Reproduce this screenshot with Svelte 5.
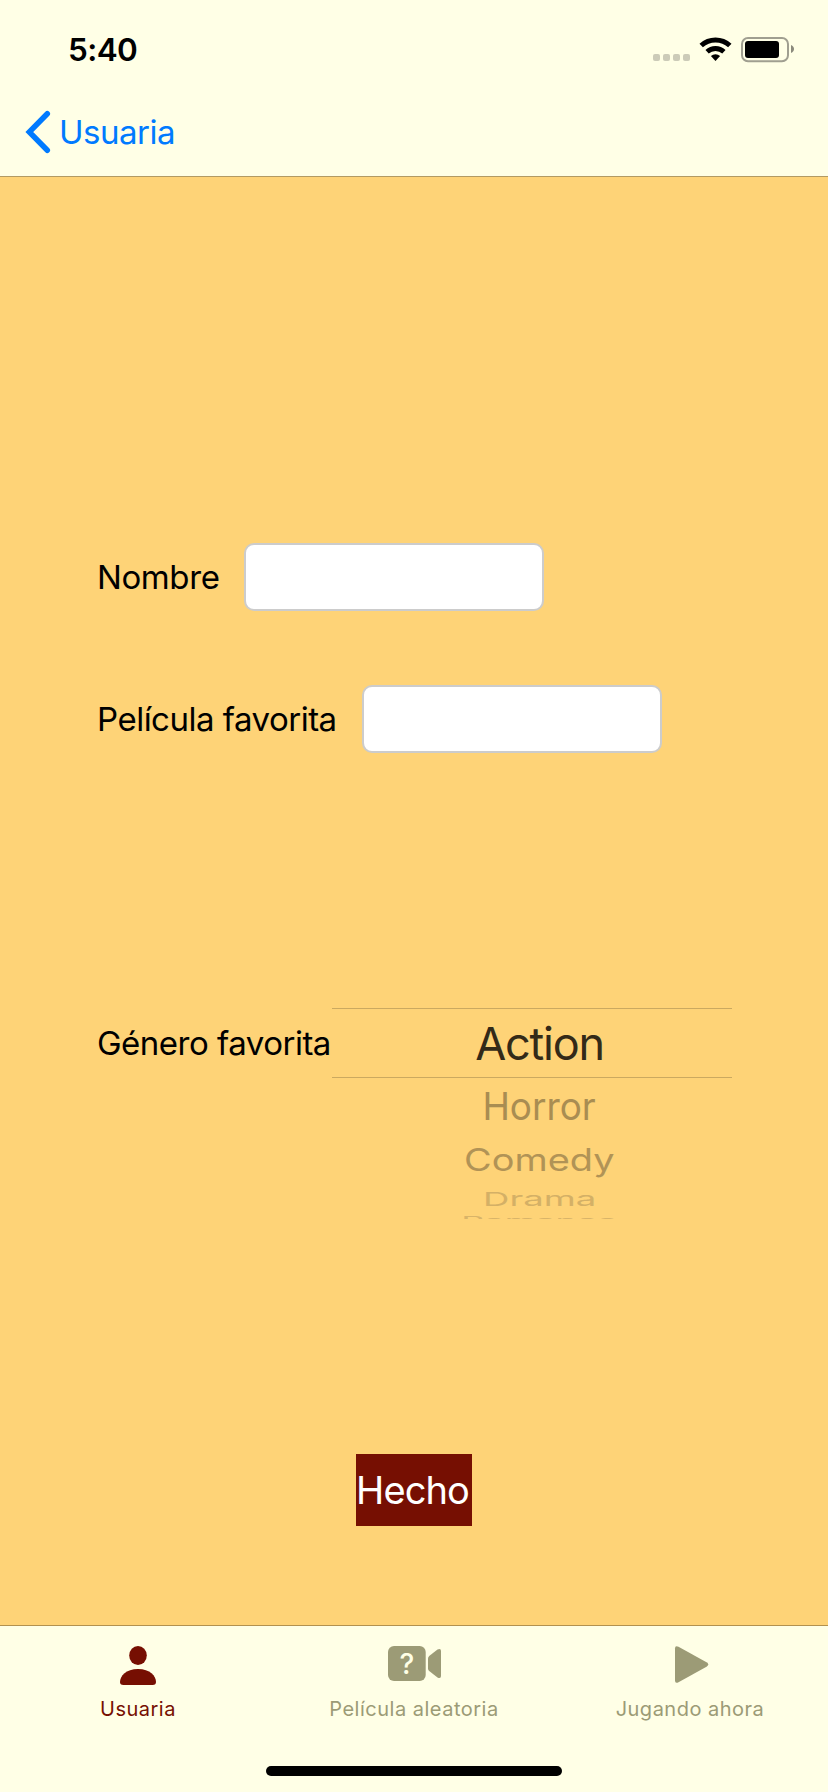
<script>
  let name = $state('');
  let movie = $state('');
  const genres = [
    { label: 'Action', cls: 'g0' },
    { label: 'Horror', cls: 'g1' },
    { label: 'Comedy', cls: 'g2' },
    { label: 'Drama', cls: 'g3' },
    { label: 'Romance', cls: 'g4' }
  ];
</script>

<div class="screen">
  <header>
    <div class="status">
      <span class="time">5:40</span>
      <svg class="indicators" width="152" height="40" viewBox="648 30 152 40">
        <g fill="#cccbb8">
          <rect x="653" y="54" width="7" height="7" rx="2" />
          <rect x="663" y="54" width="7" height="7" rx="2" />
          <rect x="673" y="54" width="7" height="7" rx="2" />
          <rect x="683" y="54" width="7" height="7" rx="2" />
        </g>
        <g fill="none" stroke="#000">
          <path stroke-width="5" d="M701.2 45.5A21 21 0 0 1 729.8 45.5" />
          <path stroke-width="4.8" d="M707.1 51.8A12.3 12.3 0 0 1 723.9 51.8" />
        </g>
        <path d="M715.5 61L710.9 56A6.8 6.8 0 0 1 720.1 56Z" />
        <rect x="742" y="38" width="46" height="23.3" rx="6" fill="none" stroke="#a09f90" stroke-width="2" />
        <rect x="745" y="41" width="34" height="17" rx="3" />
        <path d="M791 45C795 46.500 795 51.500 791 53Z" fill="#8b8a7c" />
      </svg>
    </div>
    <nav>
      <svg width="26" height="44" viewBox="25 110 26 44">
        <path d="M47.3 113.700L29.300 132L47.300 150.300" fill="none" stroke="#007aff" stroke-width="5.500" stroke-linecap="round" />
      </svg>
      <span class="back">Usuaria</span>
    </nav>
  </header>

  <main>
    <label class="row"><span class="l1">Nombre</span><input bind:value={name} /></label>
    <label class="row"><span class="l2">Película favorita</span><input bind:value={movie} /></label>
    <div class="genre">
      <span class="l3">Género favorita</span>
      <div class="picker">
        {#each genres as g}
          <div class={['option', g.cls]}><span>{g.label}</span></div>
        {/each}
      </div>
    </div>
    <button><span>Hecho</span></button>
  </main>

  <footer>
    <div class="tabs">
      <div class="tab active">
        <svg width="60" height="40" viewBox="0 0 60 40" fill="currentColor">
          <ellipse cx="30" cy="9.500" rx="8.800" ry="9.500" />
          <path d="M15.500 39C13 39 12 38 12 36C12 30 18 23 30 23S48 30 48 36C48 38 47 39 44.500 39Z" />
        </svg>
        <span class="t1">Usuaria</span>
      </div>
      <div class="tab">
        <svg width="60" height="40" viewBox="0 0 60 40" fill="currentColor">
          <rect x="4" y="0" width="37.700" height="35" rx="6" />
          <path d="M44 12.500Q44 11 45.200 10L53.500 3.500Q57 2 57 5V30Q57 33 53.500 31.500L45.200 25Q44 24 44 22.500Z" />
          <text x="23" y="27.800" text-anchor="middle" font-size="28" font-weight="500" fill="#ffffe6">?</text>
        </svg>
        <span class="t2">Película aleatoria</span>
      </div>
      <div class="tab">
        <svg width="60" height="40" viewBox="0 0 60 40" fill="currentColor">
          <path d="M15 2.500Q15 -1 18.500 .7L46.500 16.300Q50 18.500 46.500 20.700L18.500 36.300Q15 38 15 34.500Z" />
        </svg>
        <span class="t3">Jugando ahora</span>
      </div>
    </div>
    <div class="home"></div>
  </footer>
</div>

<style>
  :global(body) { margin: 0; }
  .screen {
    width: 828px; height: 1792px; display: flex; flex-direction: column; overflow: hidden;
    background: #fed377; color: #000; font-family: Inter, 'Liberation Sans', sans-serif;
    font-size: 33px; white-space: nowrap;
  }
  .screen * { box-sizing: border-box; }
  svg { display: block; flex: none; }
  header { height: 177px; background: #ffffe6; border-bottom: 1px solid #b29a63; flex: none; }
  .status { height: 88px; padding: 30px 28px 0 68px; display: flex; justify-content: space-between; }
  .time { font-size: 31.5px; font-weight: 600; line-height: 40px; letter-spacing: -0.6px; }
  nav { height: 88px; padding-left: 25px; display: flex; align-items: center; gap: 8px; color: #007aff; }
  .back { letter-spacing: -0.5px; }
  main { flex: 1; padding: 366px 0 0 97px; display: flex; flex-direction: column; align-items: flex-start; }
  .row { height: 68px; margin-bottom: 74px; display: flex; align-items: center; }
  .l1 { width: 147px; letter-spacing: -0.4px; }
  .l2 { width: 265px; letter-spacing: -0.5px; }
  .l3 { width: 235px; line-height: 70px; letter-spacing: -0.5px; }
  input {
    width: 300px; height: 68px; border: 2px solid #ccc; border-radius: 10px; background: #fff;
    padding: 0 14px; font: inherit; outline: none;
  }
  .genre { display: flex; margin-top: 181px; height: 211px; }
  .picker { width: 400px; height: 211px; overflow: hidden; }
  .option { display: flex; align-items: center; justify-content: center; padding-left: 15px; font-size: 45px; color: #a98d52; }
  .option span { display: block; flex: none; line-height: 54px; }
  .g0 { height: 70px; padding-top: 2px; color: #332a18; border: solid #cba960; border-width: 1px 0; }
  .g0 span { letter-spacing: -1.2px; }
  .g1 { height: 56px; }
  .g1 span { transform: scale(0.82, 0.86); }
  .g2 { height: 52px; color: #b19356; }
  .g2 span { transform: scale(0.843, 0.68); }
  .g3 { height: 25px; color: #d4b066; }
  .g3 span { transform: scale(0.812, 0.43); }
  .g4 { height: 19px; color: #d9b468; }
  .g4 span { transform: scale(0.787, 0.25); }
  button {
    margin: 235px 0 0 259px; width: 116px; height: 72px; padding: 0 3px 0 0; border: 0; background: #760f02;
    color: #fff; font-family: inherit; font-size: 38px; line-height: 72px; text-align: center;
  }
  button span { letter-spacing: -0.9px; }
  footer { height: 167px; flex: none; background: #ffffe6; border-top: 1px solid #b2914f; }
  .tabs { height: 140px; padding-top: 20px; display: grid; grid-template-columns: repeat(3, 276px); }
  .tab { display: flex; flex-direction: column; align-items: center; color: #9c9b76; font-size: 20px; font-weight: 400; line-height: 24px; gap: 11px; }
  .tab.active { color: #760f02; }
  .t1, .t2, .t3 { letter-spacing: 0.5px; }
  .home { width: 296px; height: 10px; border-radius: 5px; background: #000; margin: 0 auto; }
</style>
